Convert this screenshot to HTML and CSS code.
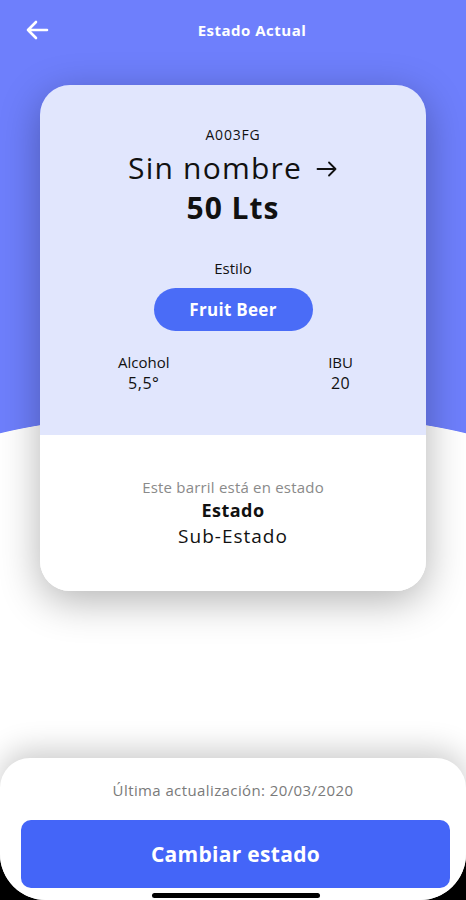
FILE: index.html
```html
<!DOCTYPE html>
<html lang="es">
<head>
    <meta charset="UTF-8">
    <meta name="viewport" content="width=device-width, initial-scale=1.0">
    <title>Estado Actual</title>
    <link rel="stylesheet" href="styles.css">
</head>
<body>
<div class="screen">
    <header class="topbar">
        <svg class="back" width="24" height="20" viewBox="0 0 24 20">
            <path d="M22 10H3M11 2L3 10l8 8" fill="none" stroke="#fff" stroke-width="2.6" stroke-linecap="round" stroke-linejoin="round"/>
        </svg>
        <h1>Estado Actual</h1>
    </header>

    <main class="content">
        <div class="card">
            <div class="card-top">
                <div class="code">A003FG</div>
                <div class="name">
                    <span>Sin nombre</span>
                    <svg class="arrow" width="22" height="16" viewBox="0 0 22 16">
                        <path d="M1.5 8h18M13 1.5L19.5 8 13 14.5" fill="none" stroke="#111" stroke-width="1.8" stroke-linecap="round" stroke-linejoin="round"/>
                    </svg>
                </div>
                <div class="volume">50 Lts</div>
                <div class="label">Estilo</div>
                <div class="pill">Fruit Beer</div>
                <div class="stats">
                    <div class="stat">
                        <span class="stat-label">Alcohol</span>
                        <span class="stat-value">5,5°</span>
                    </div>
                    <div class="stat">
                        <span class="stat-label">IBU</span>
                        <span class="stat-value">20</span>
                    </div>
                </div>
            </div>
            <div class="card-bottom">
                <div class="state-intro">Este barril está en estado</div>
                <div class="state">Estado</div>
                <div class="substate">Sub-Estado</div>
            </div>
        </div>
    </main>

    <footer class="sheet">
        <div class="updated">Última actualización: 20/03/2020</div>
        <button class="change-btn">Cambiar estado</button>
        <span class="home-bar"></span>
    </footer>
</div>
</body>
</html>
```

FILE: styles.css
```css
body {
    margin: 0;
    padding: 0;
    background-color: #000;
    font-family: 'Open Sans', 'Noto Sans', sans-serif;
    color: #111;
}

.screen {
    width: 466px;
    height: 900px;
    display: flex;
    flex-direction: column;
    overflow: hidden;
    border-radius: 0 0 46px 46px;
    background-color: #FFFFFF;
    background-image:
        radial-gradient(ellipse 300px 59px at 233px 470px, #FFFFFF 99%, transparent 100%),
        linear-gradient(#6E7FFC, #6E7FFC);
    background-size: 100% 100%, 100% 440px;
    background-repeat: no-repeat;
}

.topbar {
    height: 62px;
    flex-shrink: 0;
    display: flex;
    align-items: center;
    justify-content: center;
    padding-left: 38px;
    box-sizing: border-box;
    position: relative;
}

.topbar .back {
    position: absolute;
    left: 25px;
    top: 20px;
}

.topbar h1 {
    margin: -2px 0 0;
    font-size: 15px;
    font-weight: 700;
    letter-spacing: 0.5px;
    color: #FFFFFF;
    line-height: 20px;
}

.content {
    flex: 1;
    padding-top: 23px;
}

.card {
    width: 386px;
    margin: 0 auto;
    border-radius: 30px;
    overflow: hidden;
    box-shadow: 0 10px 40px rgba(0, 0, 0, 0.3);
    text-align: center;
}

.card-top {
    background-color: #E1E6FD;
    padding: 40px 0 41px;
    display: flex;
    flex-direction: column;
    align-items: center;
}

.code {
    font-size: 14px;
    line-height: 20px;
    letter-spacing: 0.8px;
}

.name {
    margin-top: 3px;
    font-size: 30px;
    line-height: 40px;
    letter-spacing: 1.2px;
    display: flex;
    align-items: center;
    gap: 14px;
}

.name .arrow {
    margin-top: 2px;
}

.volume {
    font-size: 30px;
    font-weight: 700;
    line-height: 40px;
    letter-spacing: 1px;
}

.label {
    margin-top: 30px;
    font-size: 15px;
    line-height: 20px;
}

.pill {
    margin-top: 10px;
    width: 159px;
    height: 43px;
    border-radius: 22px;
    background-color: #4A6CF7;
    color: #FFFFFF;
    font-size: 17px;
    font-weight: 700;
    letter-spacing: 0.3px;
    line-height: 43px;
}

.stats {
    margin-top: 21px;
    align-self: stretch;
    display: flex;
    justify-content: space-between;
    padding: 0 73px 0 78px;
}

.stat {
    display: flex;
    flex-direction: column;
    align-items: center;
}

.stat-label {
    font-size: 15px;
    line-height: 20px;
}

.stat-value {
    font-size: 16px;
    line-height: 22px;
    letter-spacing: 0.5px;
}

.card-bottom {
    background-color: #FFFFFF;
    padding: 42px 0 42px;
}

.state-intro {
    font-size: 15px;
    line-height: 20px;
    letter-spacing: 0.2px;
    color: #8A8A8A;
}

.state {
    font-size: 18px;
    font-weight: 700;
    line-height: 26px;
    letter-spacing: 0.5px;
}

.substate {
    font-size: 19px;
    line-height: 26px;
    letter-spacing: 1px;
}

.sheet {
    height: 142px;
    flex-shrink: 0;
    position: relative;
    background-color: #FFFFFF;
    border-radius: 30px 30px 0 0;
    box-shadow: 0 -8px 30px rgba(0, 0, 0, 0.2);
    padding-top: 22px;
    box-sizing: border-box;
    display: flex;
    flex-direction: column;
}

.updated {
    text-align: center;
    font-size: 15px;
    line-height: 20px;
    letter-spacing: 0.4px;
    color: #7A7A7A;
}

.change-btn {
    margin: 20px 16px 0 21px;
    height: 68px;
    border: none;
    border-radius: 10px;
    background-color: #4465F8;
    color: #FFFFFF;
    font-family: inherit;
    font-size: 21px;
    font-weight: 700;
    letter-spacing: 0.3px;
    cursor: pointer;
}

.home-bar {
    position: absolute;
    left: 152px;
    bottom: 2px;
    width: 168px;
    height: 5px;
    border-radius: 3px;
    background-color: #000;
}
```
